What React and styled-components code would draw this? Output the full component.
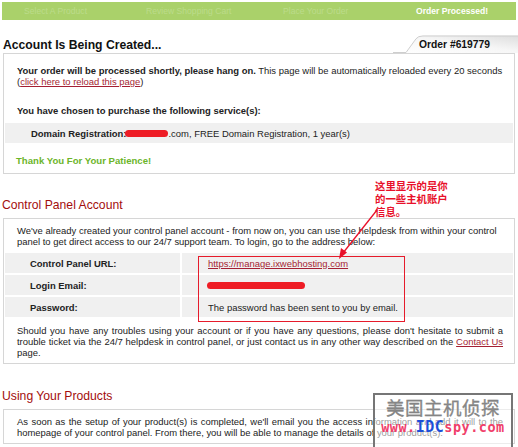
import styled, { createGlobalStyle } from 'styled-components';

const GlobalStyle = createGlobalStyle`
  body {
    margin: 0;
    background: #fff;
    font-family: "Liberation Sans", Arial, sans-serif;
    font-size: 9.45px;
    color: #222;
  }
`;

const steps = [
  { label: 'Select A Product' },
  { label: 'Review Shopping Cart' },
  { label: 'Place Your Order' },
  { label: 'Order Processed!', active: true },
];

const rows = [
  { label: 'Control Panel URL:', kind: 'link', value: 'https://manage.ixwebhosting.com' },
  { label: 'Login Email:', kind: 'hidden' },
  { label: 'Password:', kind: 'text', value: 'The password has been sent to you by email.' },
];

export default function App() {
  return (
    <Page>
      <GlobalStyle />
      <StepBar>
        {steps.map((s) => (
          <Step key={s.label} $active={s.active}>
            {s.label}
          </Step>
        ))}
      </StepBar>

      <TitleRow>
        <Title>Account Is Being Created...</Title>
        <OrderTab>
          <TabShape viewBox="0 0 125 19" preserveAspectRatio="none">
            <defs>
              <linearGradient id="tabFill" x1="0" y1="1" x2="1" y2="0">
                <stop offset="0" stopColor="#ffffff" />
                <stop offset="0.55" stopColor="#f6f6f6" />
                <stop offset="1" stopColor="#dedede" />
              </linearGradient>
            </defs>
            <path d="M0 18.5 H13 L23 4 Q25 1 30 1 H125 V19 H0 Z" fill="url(#tabFill)" />
            <path d="M0 18.5 H13 L23 4 Q25 1 30 1 H125" fill="none" stroke="#cdcdcd" />
          </TabShape>
          <TabText>Order #619779</TabText>
        </OrderTab>
      </TitleRow>

      <Box $pad="11px 0 7px">
        <Para $left="13px" $right="8px">
          <b>Your order will be processed shortly, please hang on.</b> This page will be
          automatically reloaded every 20 seconds (<Link>click here to reload this page</Link>)
        </Para>
        <Para $left="13px" $right="8px" $top="18px">
          <b>You have chosen to purchase the following service(s):</b>
        </Para>
        <ServiceRow>
          <b>Domain Registration:</b>
          <Blot $w="43px" />
          .com, FREE Domain Registration, 1 year(s)
        </ServiceRow>
        <Thanks>Thank You For Your Patience!</Thanks>
      </Box>

      <Section $top="24px">
        <SectionTitle>Control Panel Account</SectionTitle>
        <Note>
          这里显示的是你
          <br />
          的一些主机账户
          <br />
          信息。
        </Note>
        <Arrow width="50" height="58" viewBox="0 0 50 58">
          <line x1="43" y1="4" x2="9" y2="47" stroke="#e8102a" strokeWidth="1.3" />
          <path d="M5 53 L7 42 L13 46.5 Z" fill="#e8102a" />
        </Arrow>
        <Box $pad="6px 0 5px">
          <Para $left="13px" $right="11px">
            We've already created your control panel account - from now on, you can use the
            helpdesk from within your control panel to get direct access to our 24/7 support
            team. To login, go to the address below:
          </Para>
          <InfoTable>
            {rows.map((r) => (
              <InfoRow key={r.label}>
                <InfoLabel>{r.label}</InfoLabel>
                <InfoValue>
                  {r.kind === 'link' && <Link>{r.value}</Link>}
                  {r.kind === 'hidden' && <Blot $w="98px" />}
                  {r.kind === 'text' && r.value}
                </InfoValue>
              </InfoRow>
            ))}
            <Highlight />
          </InfoTable>
          <Para $left="13px" $right="11px" $top="8px" $justify>
            Should you have any troubles using your account or if you have any questions, please
            don't hesitate to submit a trouble ticket via the 24/7 helpdesk in control panel, or
            just contact us in any other way described on the <Link>Contact Us</Link> page.
          </Para>
        </Box>
      </Section>

      <Section $top="25px">
        <SectionTitle>Using Your Products</SectionTitle>
        <Box $pad="6px 0 5px">
          <Para $left="13px" $right="11px" $justify>
            As soon as the setup of your product(s) is completed, we'll email you the access
            information and add it will to the homepage of your control panel. From there, you
            will be able to manage the details of your product(s).
          </Para>
        </Box>
        <Stamp>
          <StampTitle>美国主机侦探</StampTitle>
          <StampUrl>
            <Red>www.</Red>
            <Blue>IDC</Blue>
            <Red>spy.com</Red>
          </StampUrl>
        </Stamp>
      </Section>
    </Page>
  );
}

const Page = styled.div`
  width: 518px;
  height: 447px;
  overflow: hidden;
  position: relative;
`;

const StepBar = styled.div`
  margin: 2px 2px 0 2px;
  height: 18px;
  background: #aad16a;
  display: grid;
  grid-template-columns: 122px 137px 133px 1fr;
  align-items: center;
  padding-left: 22px;
`;

const Step = styled.div`
  font-size: 8.6px;
  color: ${(p) => (p.$active ? '#fff' : '#bcdc8a')};
  font-weight: ${(p) => (p.$active ? 'bold' : 'normal')};
  white-space: nowrap;
`;

const TitleRow = styled.div`
  display: flex;
  justify-content: space-between;
  align-items: center;
  margin-top: 15px;
  height: 18px;
`;

const Title = styled.h1`
  margin: 1px 0 0 3px;
  font-size: 12.2px;
  font-weight: bold;
  color: #111;
`;

const OrderTab = styled.div`
  position: relative;
  align-self: stretch;
  width: 125px;
  display: flex;
  align-items: center;
  justify-content: flex-end;
`;

const TabShape = styled.svg`
  position: absolute;
  inset: 0;
  width: 100%;
  height: 100%;
`;

const TabText = styled.span`
  position: relative;
  font-weight: bold;
  font-size: 10.3px;
  color: #111;
  margin-right: 28px;
`;

const Box = styled.div`
  margin: 0 3px;
  border: 1px solid #d6d6d6;
  padding: ${(p) => p.$pad};
`;

const Para = styled.p`
  margin: ${(p) => p.$top || 0} ${(p) => p.$right} 0 ${(p) => p.$left};
  line-height: 11px;
  font-size: 9.45px;
  color: #222;
  text-align: ${(p) => (p.$justify ? 'justify' : 'left')};
`;

const Link = styled.a`
  color: #a51f33;
  text-decoration: underline;
  cursor: pointer;
`;

const ServiceRow = styled.div`
  margin: 7px 1px 0;
  background: #f0f0f0;
  height: 20px;
  display: flex;
  align-items: center;
  padding-left: 26px;
  white-space: nowrap;
`;

const Blot = styled.span`
  display: inline-block;
  width: ${(p) => p.$w};
  height: 7px;
  border-radius: 4px;
  background: #ee1c25;
  margin-left: -1px;
`;

const Thanks = styled.div`
  margin: 12px 12px 0;
  line-height: 11px;
  color: #6cb52a;
  font-weight: bold;
  font-size: 9.6px;
`;

const Section = styled.section`
  position: relative;
  margin-top: ${(p) => p.$top};
`;

const SectionTitle = styled.h2`
  margin: 0 0 6px 2px;
  line-height: 14px;
  font-size: 12.2px;
  font-weight: normal;
  color: #a30d0d;
`;

const Note = styled.div`
  position: absolute;
  left: 375px;
  top: -19px;
  font-family: "Noto Sans CJK SC", sans-serif;
  font-weight: bold;
  font-size: 10.4px;
  line-height: 13px;
  color: #e8102a;
`;

const Arrow = styled.svg`
  position: absolute;
  left: 334px;
  top: 8px;
  z-index: 2;
`;

const InfoTable = styled.div`
  position: relative;
  margin: 6px 1px 0;
  display: grid;
  gap: 2px;
`;

const InfoRow = styled.div`
  display: grid;
  grid-template-columns: 175px 1fr;
  gap: 2px;
  height: 20px;
`;

const InfoLabel = styled.div`
  background: #f0f0f0;
  font-weight: bold;
  display: flex;
  align-items: center;
  padding-left: 25px;
`;

const InfoValue = styled.div`
  background: #f0f0f0;
  display: flex;
  align-items: center;
  padding-left: 26px;
`;

const Highlight = styled.div`
  position: absolute;
  left: 193px;
  top: 3px;
  width: 205px;
  height: 64px;
  border: 1px solid #e61b2b;
  pointer-events: none;
`;

const Stamp = styled.div`
  position: absolute;
  left: 373px;
  top: 4px;
  width: 136px;
  height: 60px;
  border: 2px solid #767676;
  background: rgba(255, 255, 255, 0.55);
  display: flex;
  flex-direction: column;
  align-items: center;
`;

const StampTitle = styled.div`
  font-family: "Noto Sans CJK SC", sans-serif;
  font-size: 18.5px;
  line-height: 25px;
  letter-spacing: 0.5px;
  color: #8a8a8a;
  -webkit-text-stroke: 0.3px #777;
`;

const StampUrl = styled.div`
  font-family: "DejaVu Sans Mono", monospace;
  font-weight: bold;
  font-size: 13.5px;
  line-height: 14px;
  letter-spacing: 0.5px;
`;

const Red = styled.span`
  color: #f0406a;
`;

const Blue = styled.span`
  color: #1c4fd8;
  font-size: 15px;
`;
